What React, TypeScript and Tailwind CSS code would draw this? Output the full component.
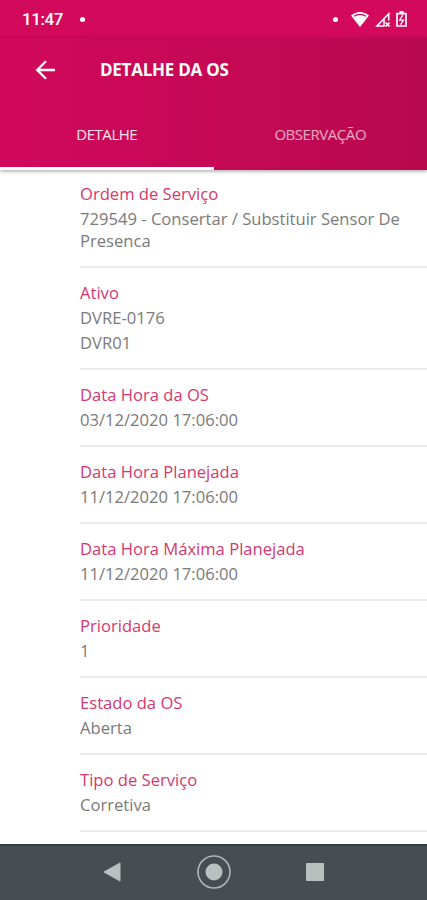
interface DetailItem {
	label: string;
	lines: string[];
}

const DETAILS: DetailItem[] = [
	{ label: 'Ordem de Serviço', lines: ['729549 - Consertar / Substituir Sensor De Presenca'] },
	{ label: 'Ativo', lines: ['DVRE-0176', 'DVR01'] },
	{ label: 'Data Hora da OS', lines: ['03/12/2020 17:06:00'] },
	{ label: 'Data Hora Planejada', lines: ['11/12/2020 17:06:00'] },
	{ label: 'Data Hora Máxima Planejada', lines: ['11/12/2020 17:06:00'] },
	{ label: 'Prioridade', lines: ['1'] },
	{ label: 'Estado da OS', lines: ['Aberta'] },
	{ label: 'Tipo de Serviço', lines: ['Corretiva'] },
];

function StatusBar() {
	return (
		<div className="flex h-[38px] items-center bg-[#d30a5c] pl-[22px] pr-[20px] text-white">
			<span className="font-[Roboto,sans-serif] text-[17px] font-medium leading-none tracking-[-0.4px]">11:47</span>
			<span className="ml-[17px] size-[5px] rounded-full bg-white" />
			<span className="ml-auto mr-[13px] size-[5px] rounded-full bg-white" />
			<svg className="mr-[6px] h-[15px] w-[18px]" viewBox="0 0 18 15" fill="none">
				<path d="M0 3.6C5.4-1.1 12.6-1.1 18 3.6L9 15Z" fill="#fff" />
				<path d="M3 4.3C6.6 2 11.4 2 15 4.3" stroke="#d30a5c" strokeWidth="1.3" />
			</svg>
			<svg className="mr-[6px] h-[15px] w-[15px]" viewBox="0 0 15 15" fill="none">
				<path d="M13.7 8.5V1.8L2 14H9.5" stroke="#fff" strokeWidth="1.6" />
				<path d="M9 7V14M10.5 10.5L14.5 14.5M14.5 10.5L10.5 14.5" stroke="#fff" strokeWidth="1.6" />
			</svg>
			<svg className="h-4 w-[11px]" viewBox="0 0 11 16" fill="none">
				<path d="M3.5 0H7.5V2H3.5Z" fill="#fff" />
				<path d="M1 2.7H10V15H1Z" stroke="#fff" strokeWidth="1.7" />
				<path d="M6.8 4.2L3.6 9.2H7.4L4.6 13.6" stroke="#fff" strokeWidth="1.3" />
			</svg>
		</div>
	);
}

function Header() {
	return (
		<header className="relative z-10 flex h-[132px] flex-col bg-linear-to-r from-[#d1095b] via-[#c60855] to-[#b7094e] shadow-[0_1px_4px_rgba(0,0,0,0.4)]">
			<div className="flex h-16 items-center pl-[35px]">
				<svg className="h-5 w-5" viewBox="0 0 20 20" fill="none" stroke="#fff" strokeWidth="2.3">
					<path d="M20 10H2.2M11 1.2L2.2 10L11 18.8" />
				</svg>
				<h1 className="ml-[45px] text-[17px] font-bold tracking-[-0.25px] text-white">DETALHE DA OS</h1>
			</div>
			<nav className="grid flex-1 grid-cols-2 text-[15px] tracking-[-0.45px]">
				<button className="border-b-[3px] border-white text-white/90">DETALHE</button>
				<button className="border-b-[3px] border-transparent text-white/65">OBSERVAÇÃO</button>
			</nav>
		</header>
	);
}

function DetailRow({ label, lines }: DetailItem) {
	return (
		<section className="ml-20 border-b-2 border-[#ebebeb] pt-[13px] pb-[14px] text-[16.6px]">
			<h2 className="leading-[24px] text-[#d4386f]">{label}</h2>
			{lines.map((line, i) => (
				<p key={line} className={`leading-[22px] text-[#7a7a7a] ${i > 0 ? 'mt-[3px]' : 'mt-[2px]'}`}>{line}</p>
			))}
		</section>
	);
}

function NavigationBar() {
	return (
		<div className="flex h-14 shrink-0 items-center justify-center gap-[75px] border-t-2 border-[#2b4140] bg-[#474e53] pb-[2px]">
			<svg className="-ml-px mr-px h-5 w-[18px]" viewBox="0 0 18 20">
				<path d="M17 1V19L1 10Z" fill="#babfc0" stroke="#babfc0" strokeLinejoin="round" />
			</svg>
			<svg className="size-[34px]" viewBox="0 0 34 34">
				<circle cx="17" cy="17" r="16" fill="none" stroke="#b0b5b7" strokeWidth="1.6" />
				<circle cx="17" cy="17" r="8.5" fill="#babfc0" />
			</svg>
			<div className="size-[18px] rounded-[1px] bg-[#babfc0]" />
		</div>
	);
}

export default function App() {
	return (
		<div className="flex h-[900px] w-[427px] flex-col overflow-hidden bg-white font-['Open_Sans',sans-serif]">
			<StatusBar />
			<Header />
			<main className="-mt-px min-h-0 flex-1 overflow-hidden">
				{DETAILS.map(item => <DetailRow key={item.label} {...item} />)}
			</main>
			<NavigationBar />
		</div>
	);
}
